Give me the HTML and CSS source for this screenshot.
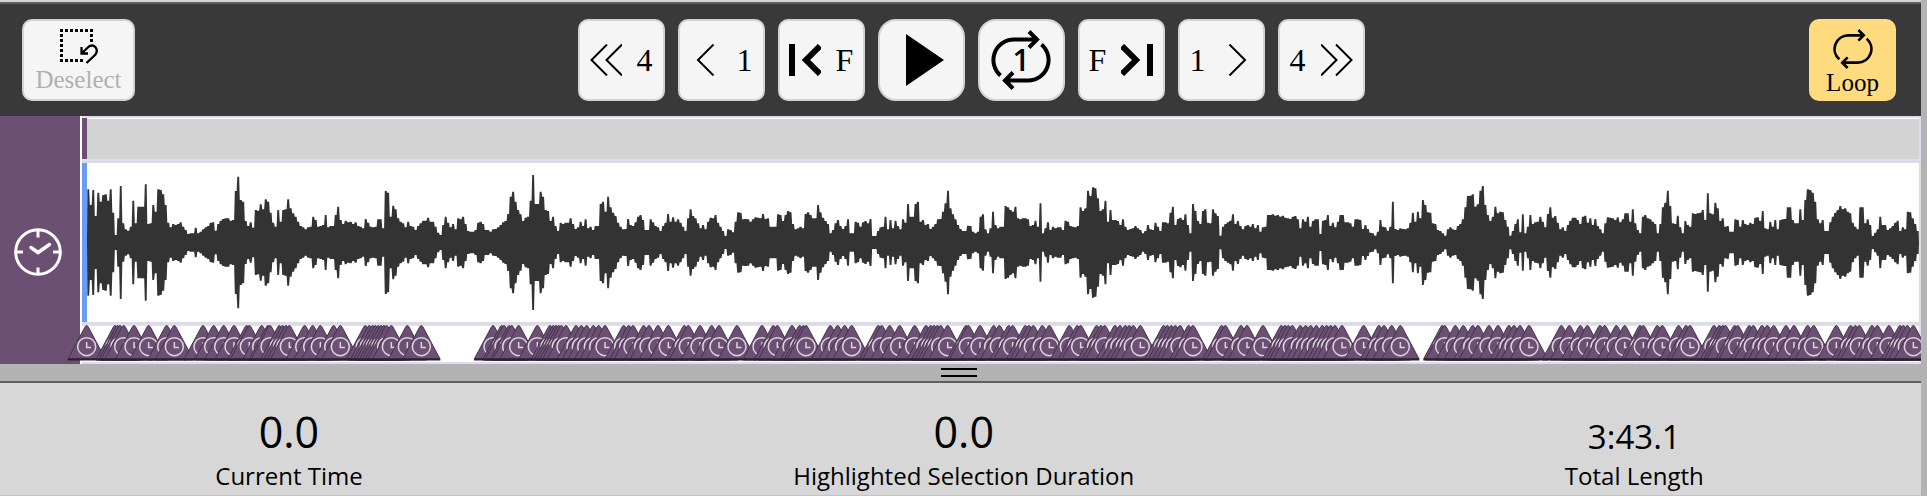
FILE: index.html
```html
<!DOCTYPE html>
<html lang="en">
<head>
<meta charset="utf-8">
<title>Audio timeline</title>
<link rel="stylesheet" href="styles.css">
</head>
<body>
<svg class="defs" aria-hidden="true">
  <symbol id="loop" viewBox="0 0 60 60">
    <g fill="none" stroke="#000" stroke-width="4">
      <path d="M9.5 45.5A20.5 20.5 0 0 1 23 9.5H46M38 1.500L46 9.500L38 17.500"/>
      <path d="M50.500 14.500A20.500 20.500 0 0 1 37 50.500H14M22 42.500L14 50.500L22 58.500"/>
    </g>
  </symbol>
  <symbol id="marker" viewBox="0 0 40 36" overflow="visible">
    <path d="M18.600 1.500Q20 -.5 21.400 1.500L38.500 33.500H1.500Z" fill="#6c5074" stroke="#46344b" stroke-width="1"/>
    <path d="M1 34.500H39" stroke="#2c2130" stroke-width="2"/>
    <circle cx="20" cy="21.700" r="9" fill="none" stroke="#ddd3df" stroke-width="1.500"/>
    <path d="M20 17V22.500H24.500" fill="none" stroke="#ddd3df" stroke-width="1.500"/>
  </symbol>
</svg>
<div class="app">
  <header class="toolbar">
    <button class="btn stacked wide" type="button" disabled>
      <svg width="38" height="35" viewBox="0 0 38 35" aria-hidden="true">
        <path d="M0 1.500H33M0 31.500H23" stroke="#000" stroke-width="3" stroke-dasharray="3 2"/>
        <path d="M1.500 5V30M31.500 5V13" stroke="#000" stroke-width="3" stroke-dasharray="3 2"/>
        <path d="M26.500 34L35.500 25.500C39 20 34 14.500 29 17.500L22 24M21.500 18V24.500H28" fill="none" stroke="#000" stroke-width="2.300"/>
      </svg>
      <span>Deselect</span>
    </button>
    <div class="transport">
      <button class="btn" type="button"><svg width="32" height="32" viewBox="0 0 32 32" aria-hidden="true"><path class="thin" d="M17 .5L1.500 16L17 31.500M32 .5L16.500 16L32 31.500"/></svg><span>4</span></button>
      <button class="btn" type="button"><svg width="32" height="32" viewBox="0 0 32 32" aria-hidden="true"><path class="thin" d="M23.500 .5L8 16L23.500 31.500"/></svg><span>1</span></button>
      <button class="btn" type="button"><svg width="32" height="32" viewBox="0 0 32 32" aria-hidden="true"><path d="M0 0H6V32H0Z"/><path class="thick" d="M31 2L17 16L31 30"/></svg><span>F</span></button>
      <button class="btn round play" type="button" aria-label="Play"><svg width="38" height="52" viewBox="0 0 38 52" aria-hidden="true"><path d="M0 0L38 26L0 52Z"/></svg></button>
      <button class="btn round" type="button" aria-label="Play once"><svg width="60" height="60" viewBox="0 0 60 60" aria-hidden="true"><use href="#loop"/><text class="once" x="30" y="41">1</text></svg></button>
      <button class="btn" type="button"><span>F</span><svg width="32" height="32" viewBox="0 0 32 32" aria-hidden="true"><path d="M26 0H32V32H26Z"/><path class="thick" d="M1 2L15 16L1 30"/></svg></button>
      <button class="btn" type="button"><span>1</span><svg width="32" height="32" viewBox="0 0 32 32" aria-hidden="true"><path class="thin" d="M8.500 .5L24 16L8.500 31.500"/></svg></button>
      <button class="btn" type="button"><span>4</span><svg width="32" height="32" viewBox="0 0 32 32" aria-hidden="true"><path class="thin" d="M0 .5L15.500 16L0 31.500M15 .5L30.500 16L15 31.500"/></svg></button>
    </div>
    <button class="btn stacked active" type="button" aria-pressed="true">
      <svg width="40" height="40" aria-hidden="true"><use href="#loop"/></svg>
      <span>Loop</span>
    </button>
  </header>

  <main class="timeline">
    <aside class="lane-label">
      <svg width="48" height="48" viewBox="0 0 48 48" fill="none" stroke="#fff" stroke-width="3" aria-hidden="true">
        <circle cx="24" cy="24" r="22.300"/>
        <path d="M24 2V9.500M24 39.500V46M2 24H9M39 24H46"/>
        <path d="M17 19.500L24 24.500L35.500 16.500" stroke-width="3.500" stroke-linecap="round"/>
      </svg>
    </aside>
    <div class="lanes">
      <div class="lane ruler"></div>
      <div class="lane wave">
        <svg class="waveform" viewBox="261 39 5496 477" preserveAspectRatio="none" role="img" aria-label="Waveform"><path id="wave" fill="#333"/></svg>
      </div>
      <div class="lane markers"><svg id="markers" class="marker-track" role="img" aria-label="Markers"></svg></div>
    </div>
  </main>

  <button class="handle" type="button" aria-label="Resize panel"><span class="grip"></span></button>

  <footer class="status">
    <div class="stat"><span class="value large">0.0</span><span class="label">Current Time</span></div>
    <div class="stat"><span class="value large">0.0</span><span class="label">Highlighted Selection Duration</span></div>
    <div class="stat"><span class="value">3:43.1</span><span class="label">Total Length</span></div>
  </footer>
</div>
<script src="timeline.js"></script>
</body>
</html>
```

FILE: styles.css
```css
* { box-sizing: border-box; }
body { margin: 0; background: #b3b3b3; font-family: "Liberation Serif", serif; color: #000; }
.defs { position: absolute; width: 0; height: 0; }

.app {
  display: flex;
  flex-direction: column;
  min-height: 100vh;
  margin-right: 6px;
  border-top: 2px solid #d4d4d4;
  overflow: clip;
}

.toolbar {
  display: flex;
  justify-content: space-between;
  align-items: center;
  padding: 15px 25px 15px 22px;
  background: #393939;
  border-top: 2px solid #5f5f5f;
}
.transport { display: flex; gap: 13px; margin-right: 2px; }

.btn {
  display: flex;
  justify-content: center;
  align-items: center;
  gap: 15px;
  width: 87px;
  height: 82px;
  padding: 0;
  border: 2px solid #d3d3d3;
  border-radius: 10px;
  background: #f5f5f5;
  color: #000;
  font: 32px/36px "Liberation Serif", serif;
}
.btn svg { flex: none; }
.btn.round { border-radius: 18px; }
.btn.play { padding-left: 8px; }
.btn.wide { width: 113px; }
.btn.stacked { flex-direction: column; gap: 2px; padding-top: 2px; font-size: 25px; line-height: 28px; }
.btn:disabled { color: #b0b0b0; }
.btn.active { gap: 0; padding-top: 6px; border-color: #ffdb7f; background: #ffdb7f; }
.thin { fill: none; stroke: #000; stroke-width: 2px; }
.thick { fill: none; stroke: #000; stroke-width: 6px; }
.once { font: 600 30px "Open Sans", sans-serif; text-anchor: middle; }

.timeline { display: flex; background: #fff; }
.lane-label {
  display: flex;
  flex: none;
  justify-content: center;
  align-items: center;
  width: 80px;
  padding: 24px 4px 0 0;
  margin-right: 2px;
  background: #6c5074;
}
.lanes { flex: 1; min-width: 0; }
.lane { border: 0 solid #dcdcf5; border-right-width: 2px; }
.ruler {
  height: 45px;
  border-top-width: 2px;
  border-bottom-width: 2px;
  background: linear-gradient(#fff 1px, #d3d3d3 1px);
  box-shadow: inset 5px 0 #6c5074;
}
.wave {
  border-top: 2px solid #dcdcdc;
  border-bottom: 2px solid #dcdcdc;
  border-right-color: #dcdcdc;
  padding-left: 5px;
  background: linear-gradient(90deg, #6b9bf8 5px, #fff 5px);
}
.waveform { display: block; width: 100%; height: 159px; }
.markers { height: 40px; padding-left: 5px; border-width: 2px 2px 2px 0; }
.marker-track { display: block; width: 100%; height: 36px; overflow: visible; }

.handle {
  display: flex;
  justify-content: center;
  align-items: center;
  height: 19px;
  padding: 0 4px 0 0;
  border: 0;
  border-bottom: 2px solid #5f5f5f;
  background: #b3b3b3;
}
.grip { width: 36px; height: 9px; border: solid #000; border-width: 2px 0; }

.status {
  display: flex;
  flex: 1;
  justify-content: space-around;
  align-items: flex-end;
  padding: 18px 2px 2px 0;
  border-bottom: 1px solid #c4c4c4;
  background: #d7d7d7;
  font-family: "Segoe UI", "Open Sans", sans-serif;
}
.stat { display: flex; flex-direction: column; align-items: center; }
.value { font-size: 33px; line-height: 44px; }
.value.large { font-size: 43px; line-height: 54px; }
.label { font-size: 24px; line-height: 34px; }
```

FILE: timeline.js
```js
// Top edge of every waveform bar; the lower half mirrors it around the middle line.
const PEAKS = `
118 165 120 198 128 155 135 133 152 118 188 255 205 108 220 238 242 230 152 220 170 170 170 103 222 220 165 185 118 120 133 165 218 232 222 225 222 217 230 240 252 250 250 233 250 245 238 232 228 218 217 242 222 212 207 205 205 212 210 123 80 150 155 213 228 217 233 180 182 163 178 148 155 188 218 230 180 215 180 178 148 175 190 200 215 228 232 238 232 230 200 210 230 228 225 195 232 228 228 195 170 210 222 212 217 215 222 217 228 230 235 207 218 230 232 230 208 208 235 123 128 200 167 178 205 215 220 232 215 228 230 240 228 220 212 212 203 215 215 230 248 255 225 200 218 232 222 238 205 208 200 222 243 245 245 240 218
215 222 240 240 245 238 237 232 225 217 213 192 140 125 155 180 193 213 203 200 152 75 162 162 125 140 180 183 213 200 228 243 218 222 218 218 205 222 237 232 215 228 208 235 230 240 228 228 162 155 185 140 172 188 198 218 230 238 237 207 225 228 217 200 195 210 240 240 208 217 228 232 243 228 218 192 215 202 215 208 218 230 243 205 178 198 205 220 235 225 238 215 203 205 195 218 230 243 258 238 240 247 215 187 188 208 207 208 215 208 202 203 205 192 207 205 230 230 230 193 195 213 195 183 187 222 238 235 230 235 192 187 195 205 205 165 187 203 213 222 250 240 220 210 228 237 228 208 250 250 215 218 230 217 213 220 207 258 258 243 232 230 200 238 210 235 212 228 238 208 218 162 200 200 162 155 215 210 225 222 237 230 222 208 207 185 160 122 175 193 208 225
237 243 243 227 228 245 250 245 200 193 238 250 235 185 225 235 230 230 168 172 180 185 170 205 208 205 205 208 228 225 212 230 160 250 235 217 240 230 235 232 232 240 212 215 228 230 232 228 172 183 175 122 138 112 115 145 183 178 152 215 180 210 210 213 225 208 230 240 237 235 228 235 240 250 243 225 238 240 218 230 243 217 217 220 188 170 225 207 203 210 193 225 250 162 183 213 222 183 178 218 220 178 190 198 257 230 222 217 212 193 222 213 228 238 228 225 230 222 235 225 245 232 230 195 195 193 197 195 200 197 203 205 207 200 198 208 235 208 215 200 230 213 208 208 252 212 210 195 228 218 232 215 195 195 217 217 220 230 208 208 210 237 225 237 248 250 257 245 210 230 232 242 230 155 237 240 235 237 238 235 218 188 215 185 205 150 165 187 188 220 222 240
243 250 257 238 232 238 240 228 222 208 172 138 137 133 170 163 122 108 165 195 213 200 170 190 185 187 210 230 257 243 222 208 247 193 250 230 195 222 217 215 200 215 232 192 172 203 198 218 238 232 243 225 212 203 203 210 222 200 197 218 205 225 207 228 238 250 220 202 203 205 210 202 217 208 190 190 215 178 220 240 250 200 195 205 208 215 222 250 222 172 158 122 168 220 222 197 232 250 213 225 230 190 192 190 188 180 210 130 190 193 158 175 213 205 230 228 245 245 208 210 230 210 222 225 218 222 203 202 213 183 235 238 215 230 210 238 210 208 207 172 172 210 220 220 178 210 150 118 120 128 155 208 220 210 243 243 217 200 188 180 168 178 175 185 190 218 230 238 172 172 220 208 225 258 248 238 200 225 225 240 235 228 218 212 243 232 238 185 187 205 222 243`
  .trim().split(/\s+/).map(Number);

const START = 261, SPAN = 5496, MIDDLE = 277.5;
const step = SPAN / PEAKS.length;
let upper = `M${START} ${MIDDLE}`;
let lower = "";
PEAKS.forEach((top, i) => {
  const left = START + i * step;
  const a = (left + 1).toFixed(1);
  const b = (left + step - 1).toFixed(1);
  upper += `L${a} ${top}L${b} ${top}`;
  lower = `L${b} ${2 * MIDDLE - top}L${a} ${2 * MIDDLE - top}` + lower;
});
document.getElementById("wave").setAttribute("d", `${upper}L${START + SPAN} ${MIDDLE}${lower}Z`);

// Marker positions on the same time scale as the waveform, one row per quarter of it.
const MARKS = [
  [260,345,353,360,371,402,446,500,523,609,641,671,702,740,748,785,804,810,838,848,858,868,914,938,961,1001,1021,1096,1108,1118,1126,1135,1143,1152,1160,1174,1222,1264],
  [39,65,72,88,95,116,172,210,220,228,236,244,258,288,304,320,340,356,375,431,446,459,491,507,534,565,613,625,660,695,717,771,846,880,892,936,959,970,978,1051,1073,1094,1115,1195,1205,1229,1259,1304,1338,1352,1362,1372,1382,1403],
  [18,25,60,101,118,146,158,196,207,220,247,268,328,352,362,410,423,434,465,480,496,508,520,541,611,622,634,646,660,686,699,785,796,843,861,909,964,975,985,997,1021,1037,1052,1069,1087,1100,1112,1125,1146,1211,1257,1272,1295,1321],
  [7,14,46,70,98,114,147,174,207,222,240,267,364,388,421,442,480,494,529,554,600,610,652,667,716,738,750,822,838,848,856,884,893,928,940,966,982,1001,1038,1062,1103,1121,1189,1232,1246,1258,1296,1312,1347,1380,1390,1402,1420]
];
const track = document.getElementById("markers");
MARKS.forEach((row, r) => row.forEach(x => {
  const use = document.createElementNS("http://www.w3.org/2000/svg", "use");
  use.setAttribute("href", "#marker");
  use.setAttribute("width", 40);
  use.setAttribute("height", 36);
  use.setAttribute("x", ((r * 1440 + x - START) / SPAN * 100).toFixed(3) + "%");
  use.setAttribute("transform", "translate(-20 -1)");
  track.appendChild(use);
}));
```
